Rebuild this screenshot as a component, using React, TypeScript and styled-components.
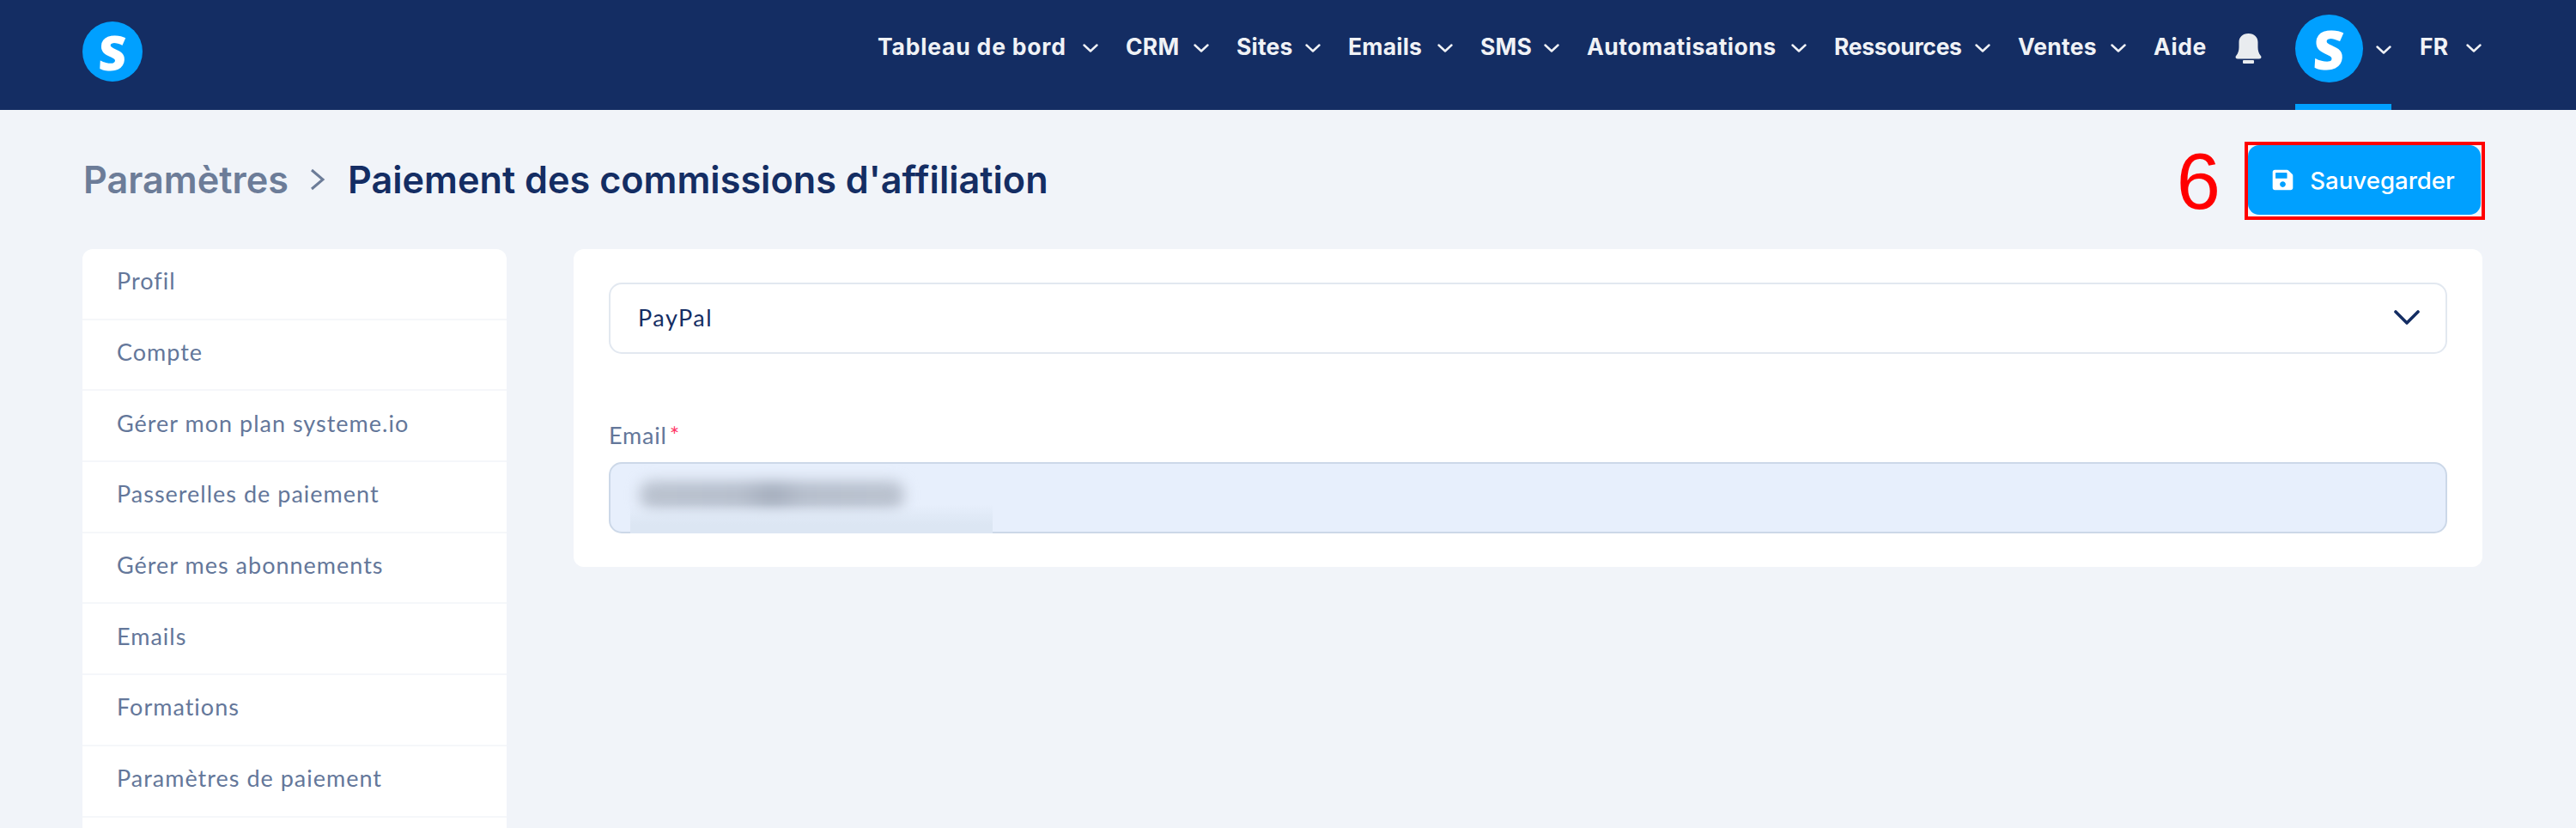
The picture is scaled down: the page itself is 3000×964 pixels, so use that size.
import React from "react";
import styled, { createGlobalStyle } from "styled-components";
import { FaSave } from "react-icons/fa";

const GlobalStyle = createGlobalStyle`
  html, body {
    margin: 0;
    padding: 0;
    background: #f1f4f9;
    font-family: "Lato", "Liberation Sans", sans-serif;
  }
`;

const Page = styled.div`
  width: 3000px;
  height: 964px;
  overflow: hidden;
  display: flex;
  flex-direction: column;
  background: #f1f4f9;
`;

const Header = styled.header`
  height: 128px;
  flex: none;
  box-sizing: border-box;
  padding: 0 110px 0 96px;
  display: flex;
  align-items: center;
  justify-content: space-between;
  background: #142d63;
`;

const LogoMark = styled.div<{ $size: number }>`
  width: ${(p) => p.$size}px;
  height: ${(p) => p.$size}px;
  flex: none;
  border-radius: 50%;
  background: #00a0ff;
  color: #fff;
  display: flex;
  align-items: center;
  justify-content: center;
  font-family: "Open Sans", sans-serif;
  font-weight: 800;
  font-size: ${(p) => Math.round(p.$size * 0.8)}px;
  line-height: 1;
`;

const LogoLetter = styled.span`
  display: inline-block;
  transform: skewX(-3deg);
`;

const BrandLogo = styled(LogoMark)`
  margin-bottom: 8px;
`;

const Nav = styled.nav`
  display: flex;
  align-items: center;
  height: 100%;
`;

const NavItem = styled.div<{ $gap?: number }>`
  display: flex;
  align-items: center;
  gap: 17px;
  margin-right: ${(p) => p.$gap ?? 32}px;
  padding-bottom: 20px;
  color: #f0f2f6;
  font-family: "Inter", sans-serif;
  font-weight: 700;
  font-size: 26.5px;
  white-space: nowrap;
`;

const NavLabel = styled.span<{ $w: number; $track?: number }>`
  width: ${(p) => p.$w}px;
  letter-spacing: ${(p) => p.$track ?? 0.2}px;
`;

const Chevron = styled.svg`
  width: 18px;
  height: 10px;
  flex: none;
  margin-top: 3px;
  fill: none;
  stroke: #f0f2f6;
  stroke-width: 2.4;
  stroke-linecap: round;
  stroke-linejoin: round;
`;

const AvatarItem = styled.div`
  position: relative;
  height: 100%;
  display: flex;
  align-items: center;
  gap: 15px;
  margin-right: 33px;
  padding-bottom: 15px;
  box-sizing: border-box;
`;

const ActiveBar = styled.span`
  position: absolute;
  left: 0;
  right: 0;
  bottom: 0;
  height: 7px;
  background: #00a0ff;
`;

const BellIcon = styled.svg`
  width: 31px;
  height: 35px;
  flex: none;
  margin: 0 39px 16px 0;
  fill: #e9ecef;
`;

const Content = styled.main`
  flex: 1;
  min-height: 0;
  padding: 37px 109px 0 96px;
  display: flex;
  flex-direction: column;
`;

const TitleRow = styled.div`
  display: flex;
  align-items: center;
  justify-content: space-between;
  height: 91px;
  margin-bottom: 34px;
`;

const Breadcrumb = styled.h1`
  margin: 0;
  padding: 0 0 3px 1px;
  display: flex;
  align-items: center;
  font-family: "Inter", sans-serif;
  font-size: 43.2px;
  font-weight: 600;
  color: #142d63;
`;

const Crumb = styled.span`
  color: #6c7c98;
`;

const CrumbArrow = styled.svg`
  width: 18px;
  height: 26px;
  margin: 0 26px 0 25px;
  fill: none;
  stroke: #6c7c98;
  stroke-width: 3;
`;

const Actions = styled.div`
  display: flex;
  align-items: center;
  gap: 28px;
  margin-right: -3px;
`;

const StepNumber = styled.span`
  font-family: "Liberation Sans", sans-serif;
  font-size: 92px;
  line-height: 1;
  color: #f00;
`;

const Highlight = styled.div`
  border: 4px solid #f00;
  padding: 0 1px 2px 0;
  line-height: 0;
`;

const SaveButton = styled.button`
  width: 271px;
  height: 81px;
  border: 0;
  border-radius: 13px;
  padding: 0 3px 0 0;
  background: #00a0ff;
  color: #fff;
  display: flex;
  align-items: center;
  justify-content: center;
  gap: 18px;
  font-family: "Inter", sans-serif;
  font-size: 27.6px;
  font-weight: 500;
`;

const Columns = styled.div`
  display: flex;
  align-items: flex-start;
  gap: 78px;
  flex: 1;
  min-height: 0;
`;

const SideMenu = styled.ul`
  width: 494px;
  flex: none;
  margin: 0;
  padding: 0;
  list-style: none;
  background: #fff;
  border-radius: 12px 12px 0 0;
`;

const SideItem = styled.li`
  height: 82.7px;
  box-sizing: border-box;
  padding: 0 40px 7px;
  display: flex;
  align-items: center;
  border-bottom: 2px solid #f5f7fa;
  color: #64779a;
  font-size: 27px;
  letter-spacing: 1px;

  &:last-child {
    border-bottom: 0;
  }
`;

const Panel = styled.section`
  flex: 1;
  box-sizing: border-box;
  height: 370px;
  padding: 39px 41px 40px;
  background: #fff;
  border-radius: 12px;
`;

const SelectBox = styled.div`
  height: 83px;
  box-sizing: border-box;
  padding: 0 30px 3px 32px;
  display: flex;
  align-items: center;
  justify-content: space-between;
  border: 2px solid #e2e8f0;
  border-radius: 15px;
  color: #142d63;
  font-size: 27px;
  letter-spacing: 1.5px;
`;

const SelectChevron = styled.svg`
  width: 30px;
  height: 17px;
  fill: none;
  stroke: #142d63;
  stroke-width: 3.6;
  stroke-linecap: round;
  stroke-linejoin: round;
`;

const FieldLabel = styled.label`
  display: block;
  margin: 78px 0 14px;
  height: 34px;
  line-height: 34px;
  color: #64779a;
  font-size: 27px;
  letter-spacing: 0.8px;
`;

const Required = styled.span`
  margin-left: 3px;
  color: #ff3366;
`;

const EmailField = styled.div`
  position: relative;
  height: 83px;
  box-sizing: border-box;
  border: 2px solid #ccd8e8;
  border-radius: 15px;
  background: #e7effc;
`;

const BlurredEmail = styled.span`
  position: absolute;
  left: 34px;
  top: 20px;
  width: 308px;
  height: 33px;
  border-radius: 14px;
  background: linear-gradient(90deg, #bac2cf, #b6becc 38%, #a5aebd 50%, #b6becc 62%, #bac2cf);
  filter: blur(8px);
`;

const BlurredStrip = styled.span`
  position: absolute;
  left: 23px;
  bottom: -2px;
  width: 422px;
  height: 34px;
  background: linear-gradient(180deg, rgba(220, 230, 243, 0), #dce6f3 70%);
`;

const navItems: { label: string; w: number; track?: number }[] = [
  { label: "Tableau de bord", w: 222, track: 0.8 },
  { label: "CRM", w: 62 },
  { label: "Sites", w: 63 },
  { label: "Emails", w: 87 },
  { label: "SMS", w: 57 },
  { label: "Automatisations", w: 221, track: 0.5 },
  { label: "Ressources", w: 147, track: -0.3 },
  { label: "Ventes", w: 91 },
];

const menu = [
  "Profil",
  "Compte",
  "Gérer mon plan systeme.io",
  "Passerelles de paiement",
  "Gérer mes abonnements",
  "Emails",
  "Formations",
  "Paramètres de paiement",
  "",
];

const Down = () => (
  <Chevron viewBox="0 0 18 10">
    <path d="M1.5 1.5L9 8.5l7.5-7" />
  </Chevron>
);

export default function App() {
  return (
    <Page>
      <GlobalStyle />
      <Header>
        <BrandLogo $size={70}>
          <LogoLetter>S</LogoLetter>
        </BrandLogo>
        <Nav>
          {navItems.map((item) => (
            <NavItem key={item.label}>
              <NavLabel $w={item.w} $track={item.track}>
                {item.label}
              </NavLabel>
              <Down />
            </NavItem>
          ))}
          <NavItem>
            <NavLabel $w={63} $track={0.6}>
              Aide
            </NavLabel>
          </NavItem>
          <BellIcon viewBox="0 0 31 35">
            <path d="M15.5 0C8.500 0 4.500 4.500 4.500 10v6c0 4-1 7-3.200 9.800C-.2 27.400.6 29.500 3 29.500h25c2.400 0 3.200-2.100 1.700-3.700C27.500 23 26.500 20 26.500 16v-6C26.500 4.500 22.500 0 15.500 0z" />
            <rect x="9" y="31" width="13" height="4" rx="1" />
          </BellIcon>
          <AvatarItem>
            <LogoMark $size={79}>
              <LogoLetter>S</LogoLetter>
            </LogoMark>
            <Down />
            <ActiveBar />
          </AvatarItem>
          <NavItem $gap={0}>
            <NavLabel $w={37}>FR</NavLabel>
            <Down />
          </NavItem>
        </Nav>
      </Header>
      <Content>
        <TitleRow>
          <Breadcrumb>
            <Crumb>Paramètres</Crumb>
            <CrumbArrow viewBox="0 0 18 26">
              <path d="M2 2l13 11L2 24" />
            </CrumbArrow>
            Paiement des commissions d'affiliation
          </Breadcrumb>
          <Actions>
            <StepNumber>6</StepNumber>
            <Highlight>
              <SaveButton>
                <FaSave size={27} />
                Sauvegarder
              </SaveButton>
            </Highlight>
          </Actions>
        </TitleRow>
        <Columns>
          <SideMenu>
            {menu.map((label, i) => (
              <SideItem key={i}>{label}</SideItem>
            ))}
          </SideMenu>
          <Panel>
            <SelectBox>
              PayPal
              <SelectChevron viewBox="0 0 30 17">
                <path d="M2 2l13 13L28 2" />
              </SelectChevron>
            </SelectBox>
            <FieldLabel>
              Email<Required>*</Required>
            </FieldLabel>
            <EmailField>
              <BlurredEmail />
              <BlurredStrip />
            </EmailField>
          </Panel>
        </Columns>
      </Content>
    </Page>
  );
}
